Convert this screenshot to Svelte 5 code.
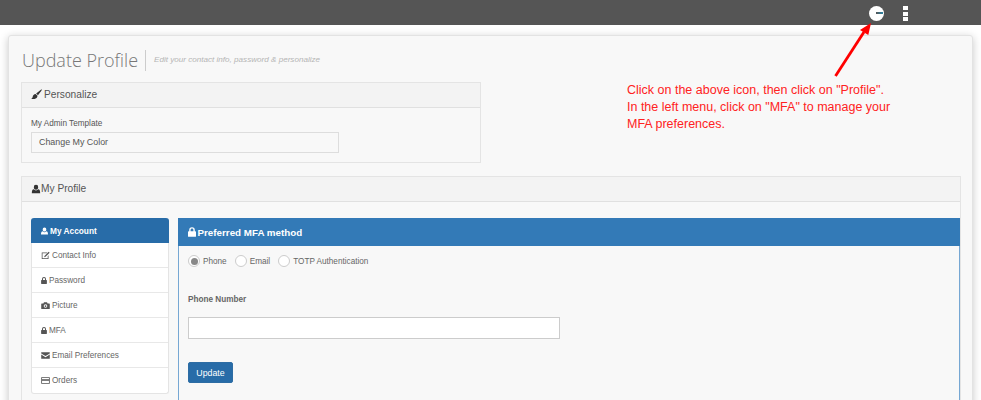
<script>
  let method = 'phone'

  const menu = [
    { label: 'Contact Info', icon: 'edit' },
    { label: 'Password', icon: 'lock' },
    { label: 'Picture', icon: 'camera' },
    { label: 'MFA', icon: 'lock' },
    { label: 'Email Preferences', icon: 'mail' },
    { label: 'Orders', icon: 'card' }
  ]

  const paths = {
    user: 'M6 1a2.6 2.6 0 0 1 2.6 2.8C8.6 5.4 7.8 6.8 6 6.8S3.4 5.4 3.4 3.8A2.6 2.6 0 0 1 6 1zM3.2 6.4C4 7.300 5 7.700 6 7.700s2-.4 2.800-1.300C10.300 6.700 11 8 11 11H1c0-3 .7-4.300 2.200-4.600z',
    lock: 'M3 5V3.600a3 3 0 0 1 6 0V5h.6c.4 0 .7.3.7.7v4.600c0 .4-.3.7-.7.7H2.400a.7.7 0 0 1-.7-.7V5.700c0-.4.3-.7.7-.7zm1.500 0h3V3.600a1.500 1.500 0 0 0-3 0z',
    edit: 'M1 2h7.500L7.500 3H2v6.500h7V6.500l1-1v5H1zM10.200 1l1.300 1.300L6 7.800l-1.800.5.500-1.800z',
    camera: 'M4 1.800h4l.8 1.400h2.200c.4 0 .7.3.7.7v6c0 .4-.3.7-.7.7H1a.7.7 0 0 1-.7-.7v-6c0-.4.3-.7.7-.7h2.200zM6 4.300a2.400 2.400 0 1 0 0 4.800 2.400 2.400 0 0 0 0-4.800zm0 1.200a1.200 1.200 0 1 1 0 2.400 1.200 1.200 0 0 1 0-2.400z',
    mail: 'M.3 1.800h11.400v1.600L6 6.800.3 3.400zM.3 4.800L6 8.200l5.700-3.400v5.400H.3z',
    card: 'M.3 1.800h11.400v8.600H.3zm1.100 1v1.500h9.200V2.800zm0 3.500v3.100h9.200V6.300z',
    brush: 'M11.500.3c.5.4.2 1-.2 1.500L7.600 6.700 5.600 5zM5 5.500l2.100 1.800c-.2 1.900-1.400 3.200-3.300 3.600-1.200.2-2.600.1-3.600-.6 1-.2 1.400-.8 1.600-1.700.3-1.500 1.400-2.900 3.200-3.100z'
  }

  const lockBox = '1.7 .6 8.600 10.400'
</script>

<div class="topbar">
  <span class="avatar"><span class="mark"></span></span>
  <span class="kebab"><i></i><i></i><i></i></span>
</div>

<div class="page">
  <div class="card">
    <div class="title">
      <h1>Update Profile</h1>
      <small>Edit your contact info, password &amp; personalize</small>
    </div>

    <section class="panel personalize">
      <header>
        <svg class="ico brush" viewBox="0 0 12 12"><path d={paths.brush} /></svg>
        Personalize
      </header>
      <div class="panel-body">
        <div class="field-label">My Admin Template</div>
        <div class="color-btn">Change My Color</div>
      </div>
    </section>

    <section class="panel profile">
      <header>
        <svg class="ico" viewBox="0 0 12 12"><path d={paths.user} /></svg>
        My Profile
      </header>
      <div class="profile-body">
        <nav class="side">
          <div class="side-head">
            <svg class="ico" viewBox="1 1 10 10"><path d={paths.user} /></svg>
            My Account
          </div>
          {#each menu as item}
            <div class="side-item">
              {#if item.icon == 'lock'}
                <svg class="ico lock" viewBox={lockBox}><path fill-rule="evenodd" d={paths.lock} /></svg>
              {:else}
                <svg class="ico" viewBox="0 0 12 12"><path fill-rule="evenodd" d={paths[item.icon]} /></svg>
              {/if}
              {item.label}
            </div>
          {/each}
        </nav>

        <div class="mfa">
          <div class="mfa-head">
            <svg class="ico" viewBox={lockBox}><path fill-rule="evenodd" d={paths.lock} /></svg>
            Preferred MFA method
          </div>
          <div class="mfa-body">
            <div class="radios">
              <button class="radio" class:on={method == 'phone'} onclick={() => (method = 'phone')}><span></span>Phone</button>
              <button class="radio" class:on={method == 'email'} onclick={() => (method = 'email')}><span></span>Email</button>
              <button class="radio" class:on={method == 'totp'} onclick={() => (method = 'totp')}><span></span>TOTP Authentication</button>
            </div>
            <label for="phone">Phone Number</label>
            <input id="phone" type="text" />
            <button class="update">Update</button>
          </div>
        </div>
      </div>
    </section>
  </div>
</div>

<!-- annotation drawn over the screenshot -->
<svg class="arrow" width="60" height="70" viewBox="0 0 60 70">
  <path d="M4.500 56 L33 12" stroke="#ff0000" stroke-width="2.800" fill="none" />
  <path d="M40 3 L37.300 15 L29 10 Z" fill="#ff0000" />
</svg>
<p class="note">
  Click on the above icon, then click on "Profile".<br />
  In the left menu, click on "MFA" to manage your<br />
  MFA preferences.
</p>

<style>
  :global(body) {
    background: #fff;
    overflow: hidden;
    font-family: 'Liberation Sans', Arial, sans-serif;
  }

  .topbar {
    height: 25px;
    background: #555;
    position: relative;
  }

  .avatar {
    position: absolute;
    left: 869px;
    top: 6px;
    width: 15px;
    height: 15px;
    border-radius: 50%;
    background: #fff;
  }

  .mark {
    position: absolute;
    left: 7px;
    top: 6px;
    width: 7px;
    height: 2px;
    background: linear-gradient(90deg, #555, #2a86a8);
  }

  .kebab {
    position: absolute;
    left: 903px;
    top: 6px;
    display: flex;
    flex-direction: column;
    gap: 1.500px;
  }

  .kebab i {
    width: 5px;
    height: 4px;
    background: #fff;
  }

  .page {
    padding: 10px 8px 0;
    height: 365px;
    overflow: hidden;
  }

  .card {
    width: 965px;
    box-sizing: border-box;
    height: 500px;
    padding: 0 12px;
    background: #f8f8f8;
    border: 1px solid #e3e3e3;
    border-radius: 3px;
    box-shadow: 0 2px 8px rgba(0, 0, 0, 0.22);
  }

  .title {
    display: flex;
    align-items: center;
    height: 46px;
    padding-left: 1px;
  }

  h1 {
    margin: 2px 0 0;
    padding-right: 7px;
    font-size: 18px;
    font-weight: 300;
    font-family: 'Open Sans', 'Liberation Sans', sans-serif;
    color: #777;
    line-height: 21px;
    border-right: 1px solid #ccc;
  }

  small {
    margin-left: 8px;
    font-size: 8.100px;
    font-style: italic;
    color: #b5b5b5;
  }

  .panel {
    border: 1px solid #e4e4e4;
    box-sizing: border-box;
  }

  .panel header {
    display: flex;
    align-items: center;
    padding-left: 9px;
    padding-bottom: 1px;
    box-sizing: border-box;
    height: 25px;
    background: #f3f3f3;
    border-bottom: 1px solid #e0e0e0;
    font-size: 10.200px;
    color: #555;
  }

  .ico {
    width: 9px;
    height: 9px;
    fill: currentColor;
    flex: none;
  }

  .panel header .ico {
    width: 10px;
    height: 10px;
    color: #333;
  }

  .panel header .brush {
    width: 11px;
    height: 11px;
    margin-right: 2px;
  }

  .personalize {
    width: 460px;
    height: 81px;
  }

  .panel-body {
    padding: 10px 9px 0;
  }

  .field-label {
    font-size: 8.200px;
    color: #555;
    line-height: 11px;
  }

  .color-btn {
    width: 308px;
    height: 21px;
    margin-top: 3px;
    padding-left: 7px;
    box-sizing: border-box;
    border: 1px solid #ddd;
    font-size: 8.900px;
    line-height: 19px;
    color: #555;
  }

  .profile {
    width: 940px;
    margin-top: 13px;
    height: 400px;
  }

  .profile-body {
    display: flex;
    align-items: flex-start;
    gap: 9px;
    padding: 16px 0 0 9px;
  }

  .side {
    width: 138px;
    flex: none;
    background: #fff;
    border: 1px solid #e4e4e4;
    border-top: 0;
    border-radius: 3px;
    box-sizing: border-box;
  }

  .side-head {
    height: 25px;
    margin: 0 -1px;
    display: flex;
    align-items: center;
    gap: 2px;
    padding-left: 10px;
    background: #286ca8;
    border-radius: 3px 3px 0 0;
    color: #fff;
    font-size: 8.300px;
    font-weight: bold;
  }

  .side-head .ico {
    width: 7px;
    height: 8px;
  }

  .side-item {
    height: 25px;
    box-sizing: border-box;
    display: flex;
    align-items: center;
    gap: 2px;
    padding-left: 9px;
    font-size: 8.200px;
    color: #666;
    border-bottom: 1px solid #e8e8e8;
  }

  .side-item .ico {
    color: #555;
  }

  .side-item .lock {
    width: 6px;
    height: 7px;
  }

  .side-item:last-child {
    border-bottom: 0;
  }

  .mfa {
    flex: 1;
    border-left: 1px solid #76a7d3;
    border-right: 1px solid #76a7d3;
  }

  .mfa-head {
    height: 28px;
    margin: 0 -1px;
    display: flex;
    align-items: center;
    gap: 1.500px;
    padding-left: 10px;
    background: #337ab7;
    color: #fff;
    font-size: 9.800px;
    font-weight: bold;
  }

  .mfa-head .ico {
    width: 8px;
    height: 10px;
  }

  .mfa-body {
    padding: 7px 9px;
    min-height: 200px;
  }

  .radios {
    display: flex;
    gap: 8px;
    height: 16px;
    align-items: center;
  }

  .radio {
    display: flex;
    align-items: center;
    gap: 3px;
    padding: 0;
    border: 0;
    background: none;
    font: 8.200px 'Liberation Sans', Arial, sans-serif;
    color: #666;
  }

  .radio span {
    width: 12px;
    height: 12px;
    box-sizing: border-box;
    border: 1px solid #ccc;
    border-radius: 50%;
    background: #fff;
    position: relative;
  }

  .radio.on span::after {
    content: '';
    position: absolute;
    left: 1.500px;
    top: 1.500px;
    width: 7px;
    height: 7px;
    border-radius: 50%;
    background: #888;
  }

  label {
    display: block;
    margin-top: 25px;
    font-size: 8.200px;
    font-weight: bold;
    color: #666;
    line-height: 11px;
  }

  input {
    display: block;
    width: 372px;
    height: 22px;
    margin-top: 12px;
    box-sizing: border-box;
    border: 1px solid #ccc;
    background: #fff;
  }

  .update {
    display: block;
    width: 45px;
    height: 21px;
    margin-top: 23px;
    padding: 0;
    border: 1px solid #2e6da4;
    border-radius: 2px;
    background: #286ca8;
    color: #fff;
    font: 8.800px 'Liberation Sans', Arial, sans-serif;
  }

  .arrow {
    position: absolute;
    left: 831px;
    top: 20px;
  }

  .note {
    position: absolute;
    left: 627px;
    top: 82px;
    margin: 0;
    font-size: 12.500px;
    line-height: 17px;
    color: #f22;
    white-space: nowrap;
  }
</style>
